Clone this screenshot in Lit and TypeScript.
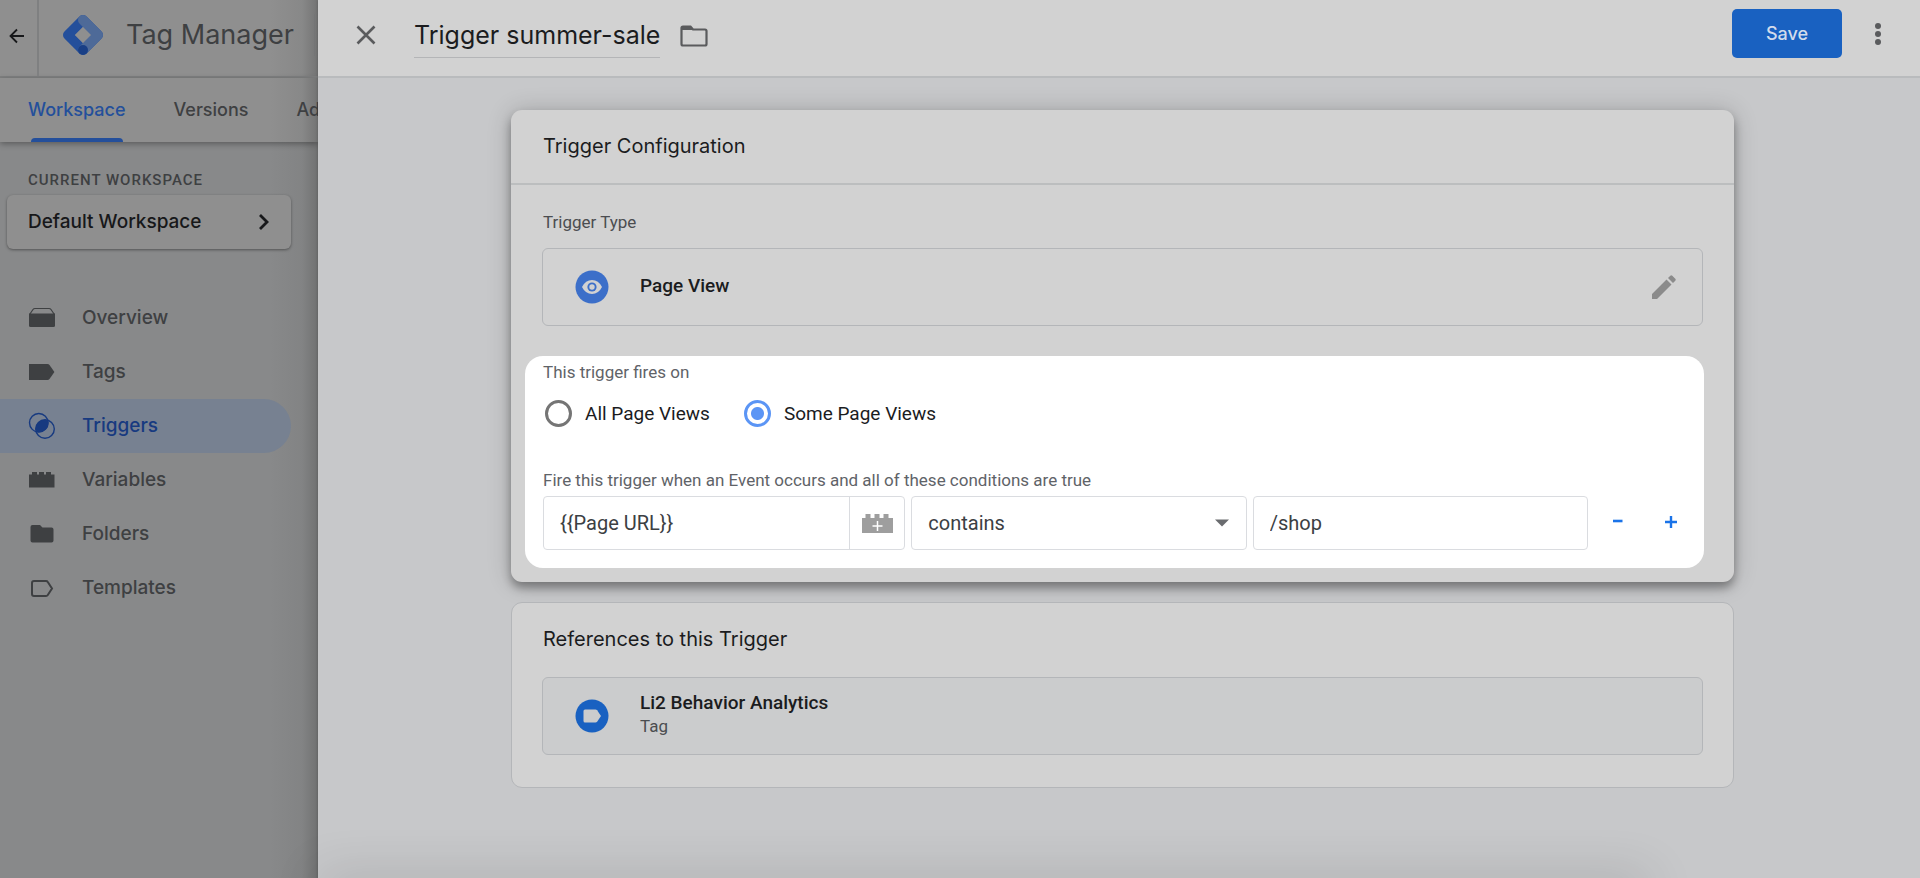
import { LitElement, html, css, svg } from "lit";
import { customElement, state } from "lit/decorators.js";
import { classMap } from "lit/directives/class-map.js";

interface NavItem {
  id: string;
  label: string;
}

const NAV: NavItem[] = [
  { id: "overview", label: "Overview" },
  { id: "tags", label: "Tags" },
  { id: "triggers", label: "Triggers" },
  { id: "variables", label: "Variables" },
  { id: "folders", label: "Folders" },
  { id: "templates", label: "Templates" },
];

const NAV_ICONS: Record<string, unknown> = {
  overview: svg`<path d="M1 9.500h26v12a1.500 1.500 0 0 1-1.500 1.500h-23A1.500 1.500 0 0 1 1 21.500z" fill="currentColor"/><path d="M1.600 10.500L5 5.500Q5.700 4.500 7 4.500h14q1.300 0 2 1l3.400 5" fill="none" stroke="currentColor" stroke-width="1.200"/>`,
  tags: svg`<path d="M1 6h18.500q1.300 0 2 1l4.900 7-4.900 7q-.7 1-2 1H1z" fill="currentColor"/>`,
  triggers: svg`<g fill="none" stroke="currentColor" stroke-width="1.400"><circle cx="10.800" cy="10.800" r="9.300"/><circle cx="17" cy="17" r="9.300"/></g><path d="M19.900 8.200A9.300 9.300 0 0 1 8.100 19.800 9.300 9.300 0 0 1 19.900 8.200z" fill="currentColor"/>`,
  variables: svg`<path d="M1 8.500h3V6h5v2.500h2V6h5v2.500h2V6h5v2.500h3.500V21.500H1z" fill="currentColor"/>`,
  folders: svg`<path d="M4.500 5H12l2.500 2.500h9q2 0 2 2v11q0 2-2 2h-19q-2 0-2-2V7q0-2 2-2z" fill="currentColor"/>`,
  templates: svg`<path d="M6 7h12q1.200 0 1.800 1l4.200 6.500-4.200 6.500q-.6 1-1.800 1H6q-2 0-2-2V9q0-2 2-2z" fill="none" stroke="currentColor" stroke-width="2"/>`,
};

@customElement("app-root")
export class AppRoot extends LitElement {
  @state() private firesOn = "some";

  static styles = css`
    :host {
      --display: Inter, Roboto, sans-serif;
      display: grid;
      grid-template-columns: 318px minmax(0, 1fr);
      min-height: 100vh;
      font-family: Roboto, sans-serif;
      font-size: 19px;
      line-height: 24px;
      color: #1b1c1e;
      overflow: hidden;
    }
    * { box-sizing: border-box; }
    button { font: inherit; color: inherit; background: none; border: 0; padding: 0; cursor: pointer; }
    svg { display: block; flex: none; }
    h1, h2, p { margin: 0; font-weight: 400; }
    a { color: inherit; text-decoration: none; }

    .side {
      background: linear-gradient(to right, transparent 270px, #6c6d6d33 302px, #60616199 318px), #88898a;
      color: #3e4042;
      min-width: 0;
      overflow: hidden;
      font-family: var(--display);
      font-weight: 500;
    }
    .top { background: linear-gradient(to right, transparent 270px, #6c6d6d33 302px, #60616199 318px), #8f8f8f; }
    .brand { display: flex; align-items: center; height: 78px; padding-bottom: 6px; border-bottom: 2px solid #7f8081; }
    .back {
      display: flex; align-items: center; justify-content: flex-end;
      width: 39px; height: 76px; margin-bottom: -6px; padding: 0 13px 4px 0; border-right: 2px solid #7f8081; color: #17181a;
    }
    .logo { margin: 0 23px 0 24px; }
    .product { flex: 1; font-size: 27px; line-height: 36px; font-weight: 400; white-space: nowrap; }
    .split { width: 1px; height: 42px; margin-right: 3px; background: #747576; }
    .tabs {
      display: flex; gap: 48px; height: 64px; padding-left: 28px; font-size: 18px;
      box-shadow: 0 2px 6px #0005; white-space: nowrap;
    }
    .tab { display: flex; align-items: center; height: 64px; }
    .tab.on { color: #244f9b; position: relative; }
    .tab.on::after {
      content: ""; position: absolute; left: 3px; right: 3px; bottom: 0; height: 4px;
      border-radius: 4px 4px 0 0; background: #244f9b;
    }
    .caption { padding: 26px 28px 3px; font: 500 15px/24px Roboto, sans-serif; letter-spacing: 1px; color: #3e4042; }
    .workspace {
      display: flex; align-items: center; justify-content: space-between;
      width: 284px; height: 54px; margin-left: 7px; padding: 0 21px; border-radius: 6px;
      background: #8f8f8f; color: #17181a; box-shadow: 0 1px 3px #0006;
    }
    .nav { display: flex; flex-direction: column; margin-top: 42px; }
    .item { display: flex; align-items: center; gap: 26px; width: 291px; height: 54px; padding-left: 28px; border-radius: 0 27px 27px 0; }
    .item.on { background: #778191; color: #173a80; }

    .panel {
      position: relative;
      display: flex; flex-direction: column;
      min-width: 0;
      background: #c7c8ca;
      box-shadow: 0 0 3px #0003;
    }
    .bar {
      display: flex; align-items: center; height: 78px; padding: 0 32px 0 37px;
      background: #d2d2d2; border-bottom: 2px solid #b9bbbd;
    }
    .close { color: #5a5b5d; margin: 0 37px 6px 0; }
    .title { height: 40px; border-bottom: 1px solid #b4b5b7; font: 400 25px/34px var(--display); margin-right: 20px; white-space: nowrap; }
    .folder { color: #5a5b5d; margin-bottom: 4px; }
    .push { flex: 1; }
    .save { width: 110px; height: 49px; margin: 0 26px 9px 0; border-radius: 5px; background: #1961c1; color: #d2dcec; font: 500 18px/24px var(--display); }
    .more { margin-bottom: 8px; color: #5a5b5d; }

    .content { flex: 1; display: flex; flex-direction: column; gap: 20px; padding: 32px 186px 40px 193px; }
    .card { border-radius: 11px; background: #d2d2d2; }
    .config { box-shadow: 0 6px 10px #0005, 0 1px 24px #0003; }
    .head { height: 75px; padding: 0 32px 2px; display: flex; align-items: center; border-bottom: 2px solid #bcbebf; }
    .heading { font: 400 20px/28px var(--display); }
    .type { padding: 25px 31px 30px; }
    .label { display: block; font-size: 17px; line-height: 24px; color: #4b4d50; }
    .type .label { padding-left: 1px; }
    .box {
      display: flex; align-items: center; gap: 31px; height: 78px; padding: 0 25px 0 32px;
      border: 1px solid #b4b6b9; border-radius: 6px;
    }
    .type .box { margin-top: 14px; }
    .name { display: block; flex: 1; padding-bottom: 3px; font-weight: 500; }
    .spot { margin: 0 30px 14px 14px; padding: 4px 18px 18px; min-height: 212px; border-radius: 18px; background: #fff; }
    .spot .label { color: #5f6368; }
    .radios { display: flex; gap: 32px; padding: 16px 0 41px; }
    .radio { display: flex; align-items: center; gap: 13px; }
    .radio input {
      appearance: none; width: 27px; height: 27px; margin: 0 0 0 2px; border: 3px solid #757575; border-radius: 50%;
    }
    .radio input:checked { border-color: #5b95f5; background: radial-gradient(circle, #5b95f5 6px, #fff 7px); }
    .row { display: grid; grid-template-columns: 363fr 336fr 336fr 92px; gap: 6px; margin-top: 4px; }
    .field {
      display: flex; align-items: center; width: 100%; height: 54px; min-width: 0;
      border: 1px solid #dadce0; border-radius: 4px; background: #fff;
      font: 20px/24px Roboto, sans-serif; color: #3c4043;
    }
    input.field, .field input { padding: 0 16px; }
    .field input { flex: 1; min-width: 0; height: 100%; border: 0; background: none; font: inherit; color: inherit; outline: none; }
    .brick { display: flex; align-items: center; justify-content: center; width: 55px; height: 52px; border-left: 1px solid #dadce0; color: #9e9e9e; }
    .select { display: grid; align-items: center; }
    .select select { appearance: none; padding: 0 16px; grid-area: 1 / 1; }
    .select svg { grid-area: 1 / 1; justify-self: end; margin-right: 18px; color: #6a6c6f; pointer-events: none; }
    .ops { display: flex; align-items: center; justify-content: space-between; padding: 0 8px 2px 17px; color: #1a73e8; }

    .refs { border: 1px solid #b4b6b9; padding: 22px 30px 32px; }
    .refs .heading { padding-left: 1px; }
    .refs .box { margin-top: 24px; background: #cbcccd; }
    .refs .name { padding: 0; }
    .refs .label { padding-bottom: 4px; line-height: 22px; }
    .dock { position: absolute; left: 0; right: 270px; bottom: -20px; height: 20px; box-shadow: 0 0 50px #0003; }
  `;

  private condition() {
    return html`
      <div class="row">
        <div class="field">
          <input aria-label="Variable" .value=${"{{Page URL}}"} />
          <button class="brick" aria-label="Insert variable">
            <svg width="31" height="19" viewBox="0 0 31 19"><path d="M0 4h3.500V0h5v4h4V0h5v4h4V0h5v4H31v15H0z" fill="currentColor"/><path d="M15.500 7v10M10.500 12h10" stroke="#fff" stroke-width="1.500"/></svg>
          </button>
        </div>
        <div class="select">
          <select class="field" aria-label="Operator"><option>contains</option><option>equals</option></select>
          <svg width="14" height="8" viewBox="0 0 14 8"><path d="M0 .5h14L7 7.500z" fill="currentColor"/></svg>
        </div>
        <input class="field" aria-label="Value" .value=${"/shop"} />
        <div class="ops">
          <button aria-label="Remove condition"><svg width="14" height="14" viewBox="0 0 14 14"><path d="M2 6h9.500" stroke="currentColor" stroke-width="2.600"/></svg></button>
          <button aria-label="Add condition"><svg width="14" height="14" viewBox="0 0 14 14"><path d="M1 7h12M7 1v12" stroke="currentColor" stroke-width="2.400"/></svg></button>
        </div>
      </div>`;
  }

  private radio(value: string, label: string) {
    return html`<label class="radio"><input type="radio" name="fires" .checked=${this.firesOn === value} @change=${() => (this.firesOn = value)} />${label}</label>`;
  }

  render() {
    return html`
      <aside class="side">
        <div class="top">
          <div class="brand">
            <button class="back" aria-label="Back">
              <svg width="15" height="16" viewBox="0 0 15 16"><path d="M15 8H2M8 1.500L1.500 8 8 14.500" fill="none" stroke="currentColor" stroke-width="1.800"/></svg>
            </button>
            <svg class="logo" width="40" height="40" viewBox="0 0 40 40">
              <path d="M20 5L35 20 20 35 5 20z" fill="none" stroke="#244f9b" stroke-width="10" stroke-linejoin="round"/>
              <path d="M20 5L35 20 20 35" fill="none" stroke="#4e6a98" stroke-width="10" stroke-linejoin="round" stroke-linecap="round"/>
              <circle cx="20" cy="35" r="5" fill="#193f86"/>
              <path d="M20 12L28 20 20 28 12 20z" fill="#8f8f8f"/>
            </svg>
            <span class="product">Tag Manager</span>
            <span class="split"></span>
          </div>
          <nav class="tabs">
            <a class="tab on" href="#workspace">Workspace</a>
            <a class="tab" href="#versions">Versions</a>
            <a class="tab" href="#admin">Admin</a>
          </nav>
        </div>
        <p class="caption">CURRENT WORKSPACE</p>
        <button class="workspace">
          Default Workspace
          <svg width="12" height="18" viewBox="0 0 12 18"><path d="M2 2l7 7-7 7" fill="none" stroke="currentColor" stroke-width="2.800"/></svg>
        </button>
        <nav class="nav">
          ${NAV.map(
            (n) => html`<a class=${classMap({ item: true, on: n.id === "triggers" })} href="#${n.id}">
              <svg width="28" height="28" viewBox="0 0 28 28">${NAV_ICONS[n.id]}</svg>${n.label}</a>`
          )}
        </nav>
      </aside>

      <main class="panel">
        <header class="bar">
          <button class="close" aria-label="Close">
            <svg width="22" height="22" viewBox="0 0 22 22"><path d="M2.500 2.500l17 17M19.500 2.500l-17 17" stroke="currentColor" stroke-width="2.600"/></svg>
          </button>
          <h1 class="title">Trigger summer-sale</h1>
          <button class="folder" aria-label="Move to folder">
            <svg width="28" height="22" viewBox="0 0 28 22"><path d="M3 1.500h7.500L13 4.500h12q1.500 0 1.500 1.500v13q0 1.500-1.500 1.500H3q-1.500 0-1.500-1.500V3q0-1.500 1.500-1.500z" fill="none" stroke="currentColor" stroke-width="2.200"/><path d="M2 1.500h8.500L13 5H2z" fill="currentColor"/></svg>
          </button>
          <span class="push"></span>
          <button class="save">Save</button>
          <button class="more" aria-label="More actions">
            <svg width="20" height="24" viewBox="0 0 20 24"><g fill="currentColor"><circle cx="10" cy="4" r="3"/><circle cx="10" cy="12" r="3"/><circle cx="10" cy="20" r="3"/></g></svg>
          </button>
        </header>

        <div class="content">
          <section class="card config">
            <div class="head"><h2 class="heading">Trigger Configuration</h2></div>
            <div class="type">
              <span class="label">Trigger Type</span>
              <div class="box">
                <svg width="34" height="34" viewBox="0 0 34 34"><circle cx="17" cy="17" r="16.500" fill="#3c6fc9"/><path d="M7 17q3.500-7 10-7t10 7q-3.500 7-10 7T7 17z" fill="#d2d2d2"/><circle cx="17" cy="17" r="4.600" fill="#3c6fc9"/><circle cx="17" cy="17" r="2.700" fill="#d2d2d2"/></svg>
                <span class="name">Page View</span>
                <button aria-label="Edit trigger type">
                  <svg width="26" height="26" viewBox="0 0 26 26"><path d="M1 20L15.500 5.500l5 5L6 25H1zM17 4l2.300-2.300q1-1 2 0l3 3q1 1 0 2L22 9z" fill="#8b8b8b"/></svg>
                </button>
              </div>
            </div>
            <div class="spot">
              <span class="label">This trigger fires on</span>
              <div class="radios" role="radiogroup" aria-label="This trigger fires on">
                ${this.radio("all", "All Page Views")} ${this.radio("some", "Some Page Views")}
              </div>
              <span class="label">Fire this trigger when an Event occurs and all of these conditions are true</span>
              ${this.condition()}
            </div>
          </section>

          <section class="card refs">
            <h2 class="heading">References to this Trigger</h2>
            <a class="box" href="#li2">
              <svg width="34" height="34" viewBox="0 0 34 34"><circle cx="17" cy="17" r="16.500" fill="#1961c1"/><path d="M10 10.500h10.500q1 0 1.600.8L26 17l-3.900 5.700q-.6.8-1.600.8H10q-1.500 0-1.500-1.500V12q0-1.500 1.500-1.500z" fill="#cbcccd"/></svg>
              <span><span class="name">Li2 Behavior Analytics</span><span class="label">Tag</span></span>
            </a>
          </section>
        </div>
        <div class="dock"></div>
      </main>
    `;
  }
}
